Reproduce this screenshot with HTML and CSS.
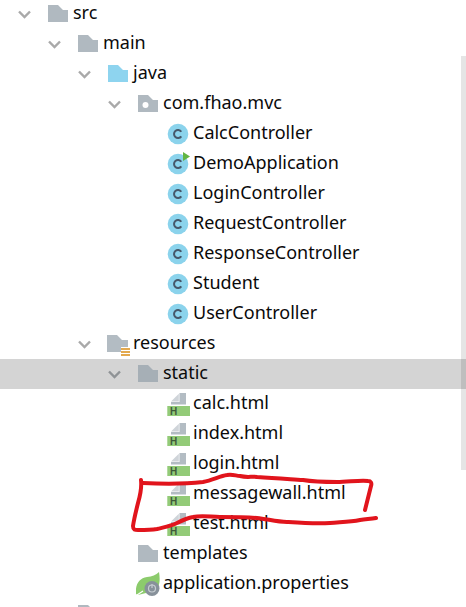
FILE: index.html
```html
<!DOCTYPE html>
<html lang="en">
<head>
<meta charset="utf-8">
<title>Project tree</title>
<link rel="stylesheet" href="styles.css">
</head>
<body>
<svg class="defs" aria-hidden="true">
  <symbol id="chev" viewBox="0 0 13 9"><path d="M1 1.5 6.5 7 12 1.5" fill="none" stroke="currentColor" stroke-width="2.4"/></symbol>
  <symbol id="folder" viewBox="0 0 24 24"><path d="M2 3h10l5 5h5v12H2z" fill="currentColor"/></symbol>
  <symbol id="pkg" viewBox="0 0 24 24"><path d="M2 3h10l5 5h5v12H2z" fill="currentColor"/><circle cx="9.500" cy="13" r="3" fill="#fff"/></symbol>
  <symbol id="res" viewBox="0 0 24 24"><path d="M1 3h10l5 5h6v12H1z" fill="#b3bcc3"/><path d="M15 15h9v9h-9z" fill="#fff"/><path d="M15 16h9v2h-9zM15 19h9v2h-9zM15 22h9v2h-9z" fill="#e3a94f"/></symbol>
  <symbol id="cls" viewBox="0 0 24 24"><circle cx="12" cy="12" r="10.300" fill="#8bd3ec"/><path d="M15.300 9.700a4 4 0 1 0 0 4.600" fill="none" stroke="#46586a" stroke-width="2"/></symbol>
  <symbol id="app" viewBox="0 0 24 24"><circle cx="12" cy="12" r="10.300" fill="#8bd3ec"/><path d="M15.300 9.700a4 4 0 1 0 0 4.600" fill="none" stroke="#46586a" stroke-width="2"/><path d="M17 0l7 4.500-7 4.500z" fill="#62b543"/></symbol>
  <symbol id="html" viewBox="0 0 24 24"><path d="M13.500 1H20v11.500H5V10h8.500z" fill="#b3bcc3"/><path d="M5 9.500 12.800 1.700v7.800z" fill="#cfd4d9"/><path d="M1.300 14H24v10H1.300z" fill="#93cb78"/><text x="4" y="23" class="h-mark">H</text></symbol>
  <symbol id="spring" viewBox="0 0 24 24"><path d="M0 22C-1 13 3 6 11 5c5-.5 9-2 12-5 1 6 1 11-1 15l-12 6-8 2z" fill="#8ccb6c"/><path d="M1 23 7 19" stroke="#fff" stroke-width="1.200"/><circle cx="16" cy="16.500" r="7.500" fill="#87919a"/><circle cx="16" cy="16.500" r="3.500" fill="none" stroke="#c8ced3" stroke-width="1.200"/><path d="M16 12v4" stroke="#c8ced3" stroke-width="1.200"/></symbol>
</svg>

<main class="page">
  <ul class="tree">
    <li class="row l0"><svg class="chev"><use href="#chev"/></svg><svg class="icon folder"><use href="#folder"/></svg><span>src</span></li>
    <li class="row l1"><svg class="chev"><use href="#chev"/></svg><svg class="icon folder"><use href="#folder"/></svg><span>main</span></li>
    <li class="row l2"><svg class="chev"><use href="#chev"/></svg><svg class="icon source"><use href="#folder"/></svg><span>java</span></li>
    <li class="row l3"><svg class="chev"><use href="#chev"/></svg><svg class="icon folder"><use href="#pkg"/></svg><span>com.fhao.mvc</span></li>
    <li class="row l4 leaf"><svg class="icon"><use href="#cls"/></svg><span>CalcController</span></li>
    <li class="row l4 leaf"><svg class="icon"><use href="#app"/></svg><span>DemoApplication</span></li>
    <li class="row l4 leaf"><svg class="icon"><use href="#cls"/></svg><span>LoginController</span></li>
    <li class="row l4 leaf"><svg class="icon"><use href="#cls"/></svg><span>RequestController</span></li>
    <li class="row l4 leaf"><svg class="icon"><use href="#cls"/></svg><span>ResponseController</span></li>
    <li class="row l4 leaf"><svg class="icon"><use href="#cls"/></svg><span>Student</span></li>
    <li class="row l4 leaf"><svg class="icon"><use href="#cls"/></svg><span>UserController</span></li>
    <li class="row l2"><svg class="chev"><use href="#chev"/></svg><svg class="icon"><use href="#res"/></svg><span>resources</span></li>
    <li class="row l3 selected"><svg class="chev"><use href="#chev"/></svg><svg class="icon folder"><use href="#folder"/></svg><span>static</span></li>
    <li class="row l4 leaf"><svg class="icon"><use href="#html"/></svg><span>calc.html</span></li>
    <li class="row l4 leaf"><svg class="icon"><use href="#html"/></svg><span>index.html</span></li>
    <li class="row l4 leaf"><svg class="icon"><use href="#html"/></svg><span>login.html</span></li>
    <li class="row l4 leaf"><svg class="icon"><use href="#html"/></svg><span>messagewall.html</span></li>
    <li class="row l4 leaf"><svg class="icon"><use href="#html"/></svg><span>test.html</span></li>
    <li class="row l3 leaf"><svg class="icon folder"><use href="#folder"/></svg><span>templates</span></li>
    <li class="row l3 leaf"><svg class="icon"><use href="#spring"/></svg><span>application.properties</span></li>
    <li class="row l1 leaf"><svg class="icon folder"><use href="#folder"/></svg></li>
  </ul>
  <div class="scrollbar"></div>
  <svg class="scribble" viewBox="0 0 466 607" aria-hidden="true">
    <path d="M143 483C165 484 185 484 203 482 213 480 220 476 227 475 233 474 236 476 240 476 248 478 252 476 257 477 275 478 288 479 303 480 315 482 327 482 337 482 348 482 360 480 368 481 371 481 372 483 371 486 369 494 367 502 365 510"/>
    <path d="M141 480C142 488 140 496 138 503 136 511 134 519 133 526 133 530 135 530 138 530 145 530 151 530 157 529 165 527 171 526 177 523 183 520 187 518 193 517 202 515 211 517 220 517 232 517 245 517 257 518 267 519 277 522 287 522 302 523 316 524 330 523 341 522 350 522 360 520 367 519 371 519 376 518"/>
  </svg>
</main>
</body>
</html>
```

FILE: styles.css
```css
html, body {
  margin: 0;
  padding: 0;
  height: 100%;
  overflow: hidden;
  background: #fff;
}

.defs {
  display: none;
}

.page {
  position: relative;
  height: 607px;
  overflow: hidden;
  font-family: "Noto Sans", "Open Sans", sans-serif;
  font-size: 18px;
  color: #0a0a0a;
}

.tree {
  list-style: none;
  margin: -1px 0 0;
  padding: 0;
}

.row {
  display: flex;
  align-items: center;
  height: 30px;
  white-space: nowrap;
}

.row span {
  padding-bottom: 5px;
}

.l0 { padding-left: 18px; }
.l1 { padding-left: 48px; }
.l2 { padding-left: 78px; }
.l3 { padding-left: 108px; }
.l4 { padding-left: 138px; }

.leaf .icon {
  margin-left: 28px;
}

.chev {
  width: 13px;
  height: 9px;
  margin-right: 15px;
  flex: none;
  color: #a9a9a9;
}

.icon {
  width: 24px;
  height: 24px;
  margin-right: 3px;
  flex: none;
  overflow: visible;
}

.folder {
  color: #b0b9c0;
}

.source {
  color: #8ed4ef;
}

.selected {
  background: #d4d4d4;
}

.selected .chev {
  color: #8f9396;
}

.selected .folder {
  color: #a6afb6;
}

.h-mark {
  font-family: "Liberation Sans", sans-serif;
  font-size: 10px;
  font-weight: 700;
  fill: #3f5a3a;
}

.scrollbar {
  position: absolute;
  top: 56px;
  right: 0;
  width: 5px;
  height: 414px;
  background: rgba(0, 0, 0, 0.1);
}

.scribble {
  position: absolute;
  inset: 0;
  width: 466px;
  height: 607px;
  fill: none;
  stroke: #e1141c;
  stroke-width: 4;
  stroke-linecap: round;
  stroke-linejoin: round;
}
```
